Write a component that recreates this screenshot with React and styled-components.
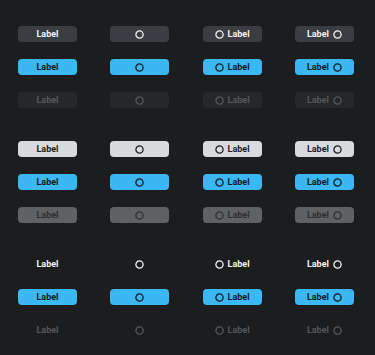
import React from "react";
import styled, { createGlobalStyle, css } from "styled-components";

const GlobalStyle = createGlobalStyle`
  html, body {
    margin: 0;
    background: #1c1d1f;
  }
  body {
    font-family: Roboto, "Liberation Sans", sans-serif;
  }
`;

const Page = styled.div`
  width: 375px;
  height: 355px;
  box-sizing: border-box;
  padding: 26px 0 0 18px;
  display: flex;
  flex-direction: column;
  gap: 33px;
  background: #1c1d1f;
`;

const Group = styled.div`
  display: grid;
  grid-template-columns: repeat(4, 59px);
  column-gap: 33.3px;
  row-gap: 17px;
`;

const variants = {
  dark: css`
    background: #3a3d41;
    color: #f2f3f4;
  `,
  light: css`
    background: #d8dbdd;
    color: #1c1d1f;
  `,
  ghost: css`
    background: transparent;
    color: #f2f3f4;
  `,
  primary: css`
    background: #3bb7f3;
    color: #15191c;
  `,
  darkDisabled: css`
    background: #25282a;
    color: #55585b;
  `,
  lightDisabled: css`
    background: #5f6163;
    color: #2d2f31;
  `,
  ghostDisabled: css`
    background: transparent;
    color: #55585b;
  `,
};

const Button = styled.button`
  width: 59px;
  height: 16px;
  padding: 0;
  border: none;
  border-radius: 4px;
  display: flex;
  align-items: center;
  justify-content: center;
  gap: 4px;
  font-family: Roboto, "Liberation Sans", sans-serif;
  font-size: 9px;
  font-weight: 700;
  line-height: 1;
  ${(p) => variants[p.$variant]}
`;

const Ring = () => (
  <svg width="9" height="9" viewBox="0 0 9 9" fill="none">
    <circle cx="4.5" cy="4.5" r="3.6" stroke="currentColor" strokeWidth="1.3" />
  </svg>
);

const groups = [
  ["dark", "primary", "darkDisabled"],
  ["light", "primary", "lightDisabled"],
  ["ghost", "primary", "ghostDisabled"],
];

function Row({ variant }) {
  return (
    <>
      <Button $variant={variant}>Label</Button>
      <Button $variant={variant}>
        <Ring />
      </Button>
      <Button $variant={variant}>
        <Ring />
        Label
      </Button>
      <Button $variant={variant}>
        Label
        <Ring />
      </Button>
    </>
  );
}

export default function App() {
  return (
    <>
      <GlobalStyle />
      <Page>
        {groups.map((g, i) => (
          <Group key={i}>
            {g.map((v) => (
              <Row key={v} variant={v} />
            ))}
          </Group>
        ))}
      </Page>
    </>
  );
}
